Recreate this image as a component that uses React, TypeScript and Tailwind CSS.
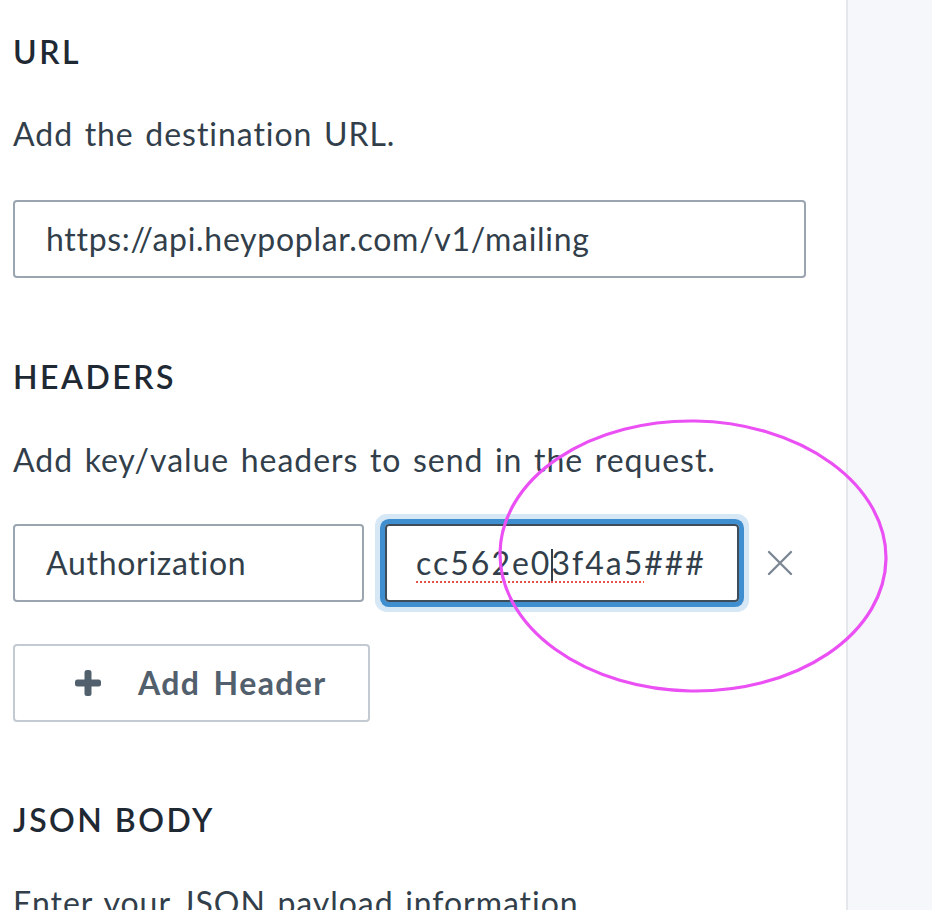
import React from "react";

const font = { fontFamily: "Lato, 'Open Sans', sans-serif" };

function Heading({ children }: { children: React.ReactNode }) {
  return (
    <div className="text-[32px] leading-[40px] font-semibold tracking-[2.5px] text-[#1f2933] whitespace-nowrap">
      {children}
    </div>
  );
}

function Desc({ children }: { children: React.ReactNode }) {
  return (
    <div className="text-[32px] leading-[40px] tracking-[0.95px] [word-spacing:2.5px] text-[#323f4b] whitespace-nowrap">
      {children}
    </div>
  );
}

export default function App() {
  return (
    <div className="relative w-[932px] h-[910px] overflow-hidden bg-white flex" style={font}>
      <div className="w-[848px] shrink-0 border-r-2 border-[#e4e7eb] pl-[13px] pt-[32px]">
        <Heading>URL</Heading>
        <div className="mt-[42px]">
          <Desc>Add the destination URL.</Desc>
        </div>
        <div className="mt-[46px] w-[793px] h-[78px] border-2 border-[#9aa5b1] rounded-[4px] flex items-center pl-[31px] text-[32px] tracking-[0.7px] text-[#323f4b] whitespace-nowrap">
          https://api.heypoplar.com/v1/mailing
        </div>

        <div className="mt-[79px]">
          <Heading>HEADERS</Heading>
        </div>
        <div className="mt-[43px]">
          <Desc>Add key/value headers to send in the request.</Desc>
        </div>

        <div className="mt-[44px] flex items-center">
          <div className="w-[351px] h-[78px] shrink-0 border-2 border-[#9aa5b1] rounded-[4px] flex items-center pl-[31px] text-[32px] tracking-[0.7px] text-[#323f4b] whitespace-nowrap">
            Authorization
          </div>
          <div className="ml-[21px] w-[354px] h-[78px] shrink-0 border-2 border-[#3e4c59] rounded-[4px] flex items-center pl-[29px] pr-[33px] text-[32px] tracking-[2px] text-[#323f4b] shadow-[0_0_0_5px_#3f8fd0,0_0_0_10px_#d6e7f5]">
            <div className="overflow-hidden whitespace-nowrap">
              <span className="underline decoration-dotted decoration-[#e5534b] decoration-2 underline-offset-[6px]">
                cc562e0
                <span className="inline-block w-[2px] -mr-[2px] h-[33px] bg-[#323f4b] align-[-7px]" />
                3f4a5
              </span>
              ####
            </div>
          </div>
          <svg className="ml-[28px] shrink-0" width="26" height="26" viewBox="0 0 26 26">
            <path d="M2 2 L24 24 M24 2 L2 24" stroke="#7b8794" strokeWidth="2.4" strokeLinecap="round" />
          </svg>
        </div>

        <div className="mt-[42px] w-[357px] h-[78px] border-2 border-[#c3cad2] rounded-[4px] flex items-center pl-[60px] text-[32px] font-bold tracking-[1.4px] [word-spacing:4px] text-[#52606d] whitespace-nowrap">
          <svg width="26" height="26" viewBox="0 0 26 26" className="shrink-0">
            <rect x="0" y="9.5" width="26" height="7" rx="2.5" fill="#52606d" />
            <rect x="9.5" y="0" width="7" height="26" rx="2.5" fill="#52606d" />
          </svg>
          <span className="ml-[37px]">Add Header</span>
        </div>

        <div className="mt-[78px]">
          <Heading>JSON BODY</Heading>
        </div>
        <div className="mt-[43px]">
          <Desc>Enter your JSON payload information.</Desc>
        </div>
      </div>
      <div className="flex-1 bg-[#f5f7fa]" />

      <svg className="absolute inset-0 pointer-events-none" width="932" height="910">
        <ellipse cx="693" cy="556" rx="193" ry="135" fill="none" stroke="#ea50f3" strokeWidth="3.2" transform="rotate(1 693 556)" />
      </svg>
    </div>
  );
}
